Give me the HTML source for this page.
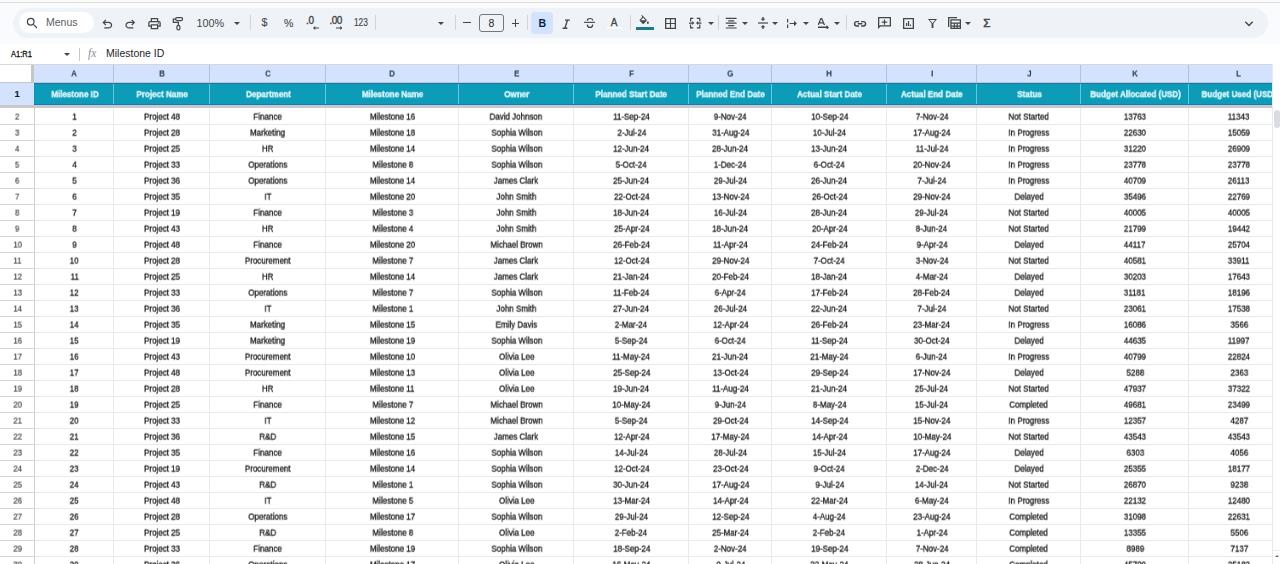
<!DOCTYPE html><html><head><meta charset="utf-8"><style>
*{box-sizing:border-box;margin:0;padding:0}
html,body{width:1280px;height:564px;overflow:hidden;background:#f9fbfd;font-family:"Liberation Sans",sans-serif;position:relative}
.a{position:absolute}
.topline{left:0;top:0;width:1280px;height:2px;background:#fbfaf8}
.topline2{left:0;top:2px;width:1280px;height:1px;background:#dcdcdc}
.tb{left:13px;top:8px;width:1255px;height:30px;border-radius:15px;background:#eff2f6}
.search{left:19px;top:12px;width:75px;height:21px;border-radius:11px;background:#fff}
.menus{left:46px;top:14.8px;font-size:10.5px;line-height:14px;color:#5b5e62}
.ic{position:absolute;fill:#444746}
.sep{position:absolute;width:1px;background:#d2d4d8;top:15px;height:15px}
.tt{position:absolute;color:#444746;font-size:10.5px;line-height:14px}
.dd{position:absolute;width:0;height:0;border-left:3px solid transparent;border-right:3px solid transparent;border-top:3.2px solid #444746;top:21.5px;margin-left:-.2px}
.fbar{left:0;top:44px;width:1280px;height:20px;background:#fff}
.grid{left:0;top:64px;width:1280px;height:500px;background:#fff;overflow:hidden}
.ch{position:absolute;top:1px;height:18px;background:#d3e3fd;color:#1e2e48;font-weight:bold;font-size:8.4px;line-height:18px;text-align:center}
.hl{position:absolute;background:#d5d7da}
.r1{position:absolute;top:19px;height:22px;background:#0c9cb8;color:#e2f9ff;font-weight:bold;font-size:8.8px;line-height:22px;text-align:center;white-space:nowrap;overflow:hidden}
.c{position:absolute;height:16px;font-size:9.4px;line-height:16px;color:#111;-webkit-text-stroke:.28px #111;text-align:center;white-space:nowrap}
.r1 span{display:inline-block;transform:translate(1.1px,.2px) scaleX(.915);will-change:transform;-webkit-text-stroke:.35px #e2f9ff}
.ch span{display:inline-block;transform:translate(1px,-.5px) scaleX(.94);will-change:transform;-webkit-text-stroke:0px #14243f}
.c span{display:inline-block;transform:translate(.9px,.6px) scaleX(.85);will-change:transform}
.rn{position:absolute;left:0;width:34px;height:16px;font-size:9.2px;line-height:16px;color:#3c3c3c;-webkit-text-stroke:.15px #3c3c3c;text-align:center}
.rn span{display:inline-block;transform:translate(.6px,.6px) scaleX(.87);will-change:transform}
.gv{position:absolute;width:1px;background:#e4ecec}
.gh{position:absolute;height:1px;background:#e4ecec;left:34px;width:1238px}
.rh{position:absolute;height:1px;background:#d6d6d6;left:0;width:34px}
</style></head><body><div class="a topline"></div><div class="a topline2"></div><div class="a tb"></div><div class="a search"></div><svg class="ic" style="left:25px;top:16px" width="14.5" height="14.5" viewBox="0 0 24 24"><path d="M15.5 14h-.79l-.28-.27A6.471 6.471 0 0 0 16 9.5 6.5 6.5 0 1 0 9.5 16c1.61 0 3.09-.59 4.23-1.57l.27.28v.79l5 4.99L20.49 19l-4.99-5zm-6 0C7.01 14 5 11.99 5 9.5S7.01 5 9.5 5 14 7.01 14 9.5 11.99 14 9.5 14z"/></svg><div class="a menus">Menus</div><svg class="ic" style="left:99.8px;top:17.2px" width="14.6" height="14.6" viewBox="0 0 24 24"><path d="M7 19v-2h7.1q1.575 0 2.738-1T18 13.5q0-1.5-1.162-2.5T14.1 10H7.8l2.6 2.6L9 14 4 9l5-5 1.4 1.4L7.8 8h6.3q2.425 0 4.163 1.575T20 13.5q0 2.35-1.737 3.925T14.1 19Z"/></svg><svg class="ic" style="left:122.9px;top:17.2px" width="14.6" height="14.6" viewBox="0 0 24 24"><path d="M9.9 19q-2.425 0-4.163-1.575T4 13.5q0-2.35 1.737-3.925T9.9 8h6.3l-2.6-2.6L15 4l5 5-5 5-1.4-1.4 2.6-2.6H9.9q-1.575 0-2.738 1T6 13.5q0 1.5 1.162 2.5T9.9 17H17v2Z"/></svg><svg class="ic" style="left:147px;top:16px" width="15" height="15" viewBox="0 0 24 24"><path d="M16 8V5H8v3H6V3h12v5ZM18 12.5q.425 0 .713-.288Q19 11.925 19 11.5t-.287-.713Q18.425 10.5 18 10.5t-.712.287Q17 11.075 17 11.5t.288.712q.287.288.712.288ZM16 19v-4H8v4Zm2 2H6v-4H2v-6q0-1.275.875-2.137Q3.75 8 5 8h14q1.275 0 2.138.863Q22 9.725 22 11v6h-4Zm2-6v-4q0-.425-.288-.713Q19.425 10 19 10H5q-.425 0-.713.287Q4 10.575 4 11v4h2v-2h12v2Z"/></svg><svg class="ic" style="left:170px;top:15px;fill:none" width="16" height="16" viewBox="0 0 16 16" stroke="#444746" stroke-width="1.2"><rect x="5.6" y="2.6" width="7" height="3" rx="1.5"/><path d="M5.6 4.1H3.3V7.4H8.4V10.3"/><rect x="6.9" y="10.3" width="3" height="4.6" rx="1.5"/></svg><div class="tt" style="left:196.5px;top:15.5px;font-size:10.8px">100%</div><div class="dd" style="left:234px"></div><div class="sep" style="left:250px"></div><div class="tt" style="left:261.5px;top:15px;font-size:10.8px;-webkit-text-stroke:.1px #444746">$</div><div class="tt" style="left:284px;top:15.5px;font-size:10.5px;-webkit-text-stroke:.1px #444746">%</div><div class="tt" style="left:306px;top:14.2px;font-size:10px;-webkit-text-stroke:.35px #444746;letter-spacing:-.3px">.0</div><svg class="ic" style="left:312.5px;top:25.5px" width="6.5" height="4" viewBox="0 0 6.5 4"><path d="M0 2L2.2 0v1.45h4.3v1.1H2.2V4z"/></svg><div class="tt" style="left:329.5px;top:14.2px;font-size:10px;-webkit-text-stroke:.35px #444746;letter-spacing:-.6px">.00</div><svg class="ic" style="left:335.8px;top:25.5px" width="6.5" height="4" viewBox="0 0 6.5 4"><path d="M6.5 2L4.3 0v1.45H0v1.1h4.3V4z"/></svg><div class="tt" style="left:354.3px;top:16.2px;font-size:10px;display:inline-block;transform:scaleX(.83);transform-origin:0 0;-webkit-text-stroke:.15px #444746">123</div><div class="sep" style="left:375px"></div><div class="dd" style="left:438px"></div><div class="sep" style="left:455px"></div><div class="a" style="left:463.3px;top:22.3px;width:7.7px;height:1.2px;background:#444746"></div><div class="a" style="left:479px;top:14px;width:25px;height:18px;border:1px solid #747775;border-radius:3px;text-align:center;font-size:10.5px;line-height:16px;color:#1f1f1f">8</div><div class="a" style="left:511.6px;top:22.5px;width:7.8px;height:1.2px;background:#444746"></div><div class="a" style="left:514.9px;top:19.2px;width:1.2px;height:7.8px;background:#444746"></div><div class="sep" style="left:527px"></div><div class="a" style="left:531px;top:12px;width:22px;height:22px;border-radius:4px;background:#d3e3fd"></div><div class="tt" style="left:538.5px;top:16px;font-size:10.5px;font-weight:bold;color:#041e49">B</div><svg class="ic" style="left:559px;top:16.5px" width="14.4" height="14.4" viewBox="0 0 24 24"><path d="M10 4v2.4h2.6l-3.6 11.2H6V20h8v-2.4h-2.6l3.6-11.2H18V4z"/></svg><svg class="ic" style="left:583px;top:17px" width="13" height="12" viewBox="0 0 13 12"><path d="M1 4.8h11v1.1H1z"/><path d="M4.3 3.8C4.3 2.3 5.4 1.5 7 1.5S9.7 2.4 9.7 3.4M4.3 7.6C4.4 9 5.5 10.4 7 10.4S9.7 9.3 9.7 7.4" style="fill:none" stroke="#444746" stroke-width="1.2"/></svg><div class="tt" style="left:610.8px;top:15.6px;font-size:10px;-webkit-text-stroke:.3px #444746">A</div><div class="a" style="left:606px;top:27.3px;width:17px;height:2px;background:rgba(255,255,255,.55)"></div><div class="sep" style="left:630px"></div><svg class="ic" style="left:638.3px;top:15px" width="12.5" height="11.5" viewBox="0 0 24 22"><path d="M16.56 8.94 7.62 0 6.21 1.41l2.38 2.38-5.15 5.15a1.49 1.49 0 0 0 0 2.12l5.5 5.5c.29.29.68.44 1.06.44s.77-.15 1.06-.44l5.5-5.5c.59-.58.59-1.53 0-2.12zM5.21 10 10 5.21 14.79 10H5.21zM19 11.5s-2 2.17-2 3.5c0 1.1.9 2 2 2s2-.9 2-2c0-1.33-2-3.5-2-3.5z"/></svg><div class="a" style="left:636px;top:27px;width:18px;height:2.7px;background:#177c88"></div><svg class="ic" style="left:664.5px;top:17.7px;fill:none" width="11" height="11" viewBox="0 0 11 11" stroke="#444746"><path d="M.65 .65h9.7v9.7H.65z" stroke-width="1.3"/><path d="M5.5 .65v9.7M.65 5.5h9.7" stroke-width="1.1"/></svg><svg class="ic" style="left:684px;top:14px" width="18" height="16" viewBox="0 0 18 16"><path d="M9.3 4.4H6.6V7.6M6.6 10.6V13.8H9.3M12.8 4.4H15.8V7.6M15.8 10.6V13.8H12.8M5 9.1H8.6M17.4 9.1H13.8" style="fill:none" stroke="#444746" stroke-width="1.2"/><path d="M8.2 7.1 10.4 9.1 8.2 11.1zM14.2 7.1 12 9.1 14.2 11.1z"/></svg><div class="dd" style="left:708px"></div><div class="sep" style="left:718px"></div><svg class="ic" style="left:724.2px;top:15.8px" width="14.4" height="14.4" viewBox="0 0 24 24"><path d="M7 15v2h10v-2H7zm-4 6h18v-2H3v2zm0-8h18v-2H3v2zm4-6v2h10V7H7zM3 3v2h18V3H3z"/></svg><div class="dd" style="left:742px"></div><svg class="ic" style="left:758px;top:17px" width="10" height="12" viewBox="0 0 10 12"><path d="M0 5.4h10v1.2H0z"/><path d="M5 4 2.6 1.8h1.7V0h1.4v1.8h1.7zM5 8 2.6 10.2h1.7V12h1.4v-1.8h1.7z"/></svg><div class="dd" style="left:772px"></div><svg class="ic" style="left:787.4px;top:18.5px" width="10" height="9" viewBox="0 0 10 9"><path d="M0 0h1.2v3.4H0zM0 5.6h1.2V9H0zM2.6 3.9h4.4V1.8L9.9 4.5 7 7.2V5.1H2.6z"/></svg><div class="dd" style="left:803px"></div><svg class="ic" style="left:818px;top:18px" width="11" height="11" viewBox="0 0 11 11"><path d="M2.5 0h1.6l3 7H5.8l-.7-1.6H1.5L.8 7H-.5zM1.9 4.3h2.8L3.3 1.2z"/><path d="M0 8.6h8.5v-1.6l2.5 2.4-2.5 2.4V9.9H0z"/></svg><div class="dd" style="left:834px"></div><div class="sep" style="left:846px"></div><svg class="ic" style="left:853px;top:19.5px;fill:none" width="15" height="8" viewBox="0 0 15 8" stroke="#444746" stroke-width="1.45"><path d="M6.1 1.6H3.8A2.2 2.2 0 0 0 3.8 6H6.1M8.1 1.6H10.4A2.2 2.2 0 0 1 10.4 6H8.1M4.8 3.8H9.4"/></svg><svg class="ic" style="left:878px;top:17px" width="13" height="12" viewBox="0 0 13 12"><path d="M0 0h13v9.5H2.5L0 12zM1.3 1.3v7.6L2 8.2h9.7V1.3z" fill-rule="evenodd"/><path d="M5.9 2.4h1.2v2.1h2.1v1.2H7.1v2.1H5.9V5.7H3.8V4.5h2.1z"/></svg><svg class="ic" style="left:903px;top:18px" width="11" height="11" viewBox="0 0 11 11"><path d="M0 0h11v11H0zM1.3 1.3v8.4h8.4V1.3z" fill-rule="evenodd"/><path d="M3 5h1.2v3H3zM4.9 3h1.2v5H4.9zM6.8 6.5H8V8H6.8z"/></svg><svg class="ic" style="left:928px;top:19px" width="9" height="9" viewBox="0 0 9 9"><path d="M0 0h9L5.4 4.5V9H3.6V4.5zM1.8 0.9l2.7 3.3 2.7-3.3z" fill-rule="evenodd"/></svg><svg class="ic" style="left:948px;top:17px" width="13" height="12" viewBox="0 0 13 12"><path d="M0 0h9v1.3H1.3V10H0z"/><path d="M2.3 2.3h10.7V12H2.3zM3.6 3.6v2h8.1v-2zm0 3.2v1.7h2.1V6.8zm3.3 0v1.7h1.7V6.8zm2.9 0v1.7h1.9V6.8zM3.6 9.7v1h2.1v-1zm3.3 0v1h1.7v-1zm2.9 0v1h1.9v-1z" fill-rule="evenodd"/></svg><div class="dd" style="left:965px"></div><div class="tt" style="left:983.3px;top:16px;font-size:11.5px;-webkit-text-stroke:.55px #444746">&Sigma;</div><svg class="ic" style="left:1243.5px;top:18.5px" width="10" height="10" viewBox="0 0 10 10"><path d="M1.3 2.8 5 6.4 8.7 2.8" fill="none" stroke="#444746" stroke-width="1.4"/></svg><div class="a fbar"></div><div class="a" style="left:10.6px;top:47px;font-size:8.4px;line-height:14px;color:#111;-webkit-text-stroke:.28px #111;transform:scaleX(.9);transform-origin:0 0">A1:R1</div><div class="dd" style="left:64.5px;top:52.5px;border-top-color:#444746"></div><div class="a" style="left:79px;top:48px;width:1px;height:13px;background:#c7c7c7"></div><div class="a" style="left:88px;top:46px;font-size:11.5px;line-height:14px;color:#8a8f94;font-style:italic;font-family:'Liberation Serif',serif">fx</div><div class="a" style="left:106px;top:46px;font-size:10.5px;line-height:14px;color:#1f1f1f">Milestone ID</div><div class="a grid"><div class="hl" style="left:0;top:0;width:1272px;height:1px"></div><div class="a" style="left:0;top:1px;width:31px;height:18px;background:#fff"></div><div class="a" style="left:31px;top:1px;width:3px;height:18px;background:#c4c7c5"></div><div class="ch" style="left:34px;width:79px"><span>A</span></div><div class="ch" style="left:113px;width:96px"><span>B</span></div><div class="ch" style="left:209px;width:116px"><span>C</span></div><div class="ch" style="left:325px;width:133px"><span>D</span></div><div class="ch" style="left:458px;width:115px"><span>E</span></div><div class="ch" style="left:573px;width:115px"><span>F</span></div><div class="ch" style="left:688px;width:83px"><span>G</span></div><div class="ch" style="left:771px;width:115px"><span>H</span></div><div class="ch" style="left:886px;width:90px"><span>I</span></div><div class="ch" style="left:976px;width:104px"><span>J</span></div><div class="ch" style="left:1080px;width:108px"><span>K</span></div><div class="ch" style="left:1188px;width:100px"><span>L</span></div><div class="hl" style="left:113px;top:1px;width:1px;height:18px;background:#b4c0d4"></div><div class="hl" style="left:209px;top:1px;width:1px;height:18px;background:#b4c0d4"></div><div class="hl" style="left:325px;top:1px;width:1px;height:18px;background:#b4c0d4"></div><div class="hl" style="left:458px;top:1px;width:1px;height:18px;background:#b4c0d4"></div><div class="hl" style="left:573px;top:1px;width:1px;height:18px;background:#b4c0d4"></div><div class="hl" style="left:688px;top:1px;width:1px;height:18px;background:#b4c0d4"></div><div class="hl" style="left:771px;top:1px;width:1px;height:18px;background:#b4c0d4"></div><div class="hl" style="left:886px;top:1px;width:1px;height:18px;background:#b4c0d4"></div><div class="hl" style="left:976px;top:1px;width:1px;height:18px;background:#b4c0d4"></div><div class="hl" style="left:1080px;top:1px;width:1px;height:18px;background:#b4c0d4"></div><div class="hl" style="left:1188px;top:1px;width:1px;height:18px;background:#b4c0d4"></div><div class="hl" style="left:1288px;top:1px;width:1px;height:18px;background:#b4c0d4"></div><div class="hl" style="left:0;top:18px;width:1272px;height:1px;background:#c4c7c5"></div><div class="a" style="left:0;top:19px;width:34px;height:22px;background:#d3e3fd;color:#041e49;font-weight:bold;font-size:9.4px;line-height:22px;text-align:center;-webkit-text-stroke:.1px #041e49">1</div><div class="r1" style="left:34px;width:79px"><span>Milestone ID</span></div><div class="r1" style="left:113px;width:96px"><span>Project Name</span></div><div class="r1" style="left:209px;width:116px"><span>Department</span></div><div class="r1" style="left:325px;width:133px"><span>Milestone Name</span></div><div class="r1" style="left:458px;width:115px"><span>Owner</span></div><div class="r1" style="left:573px;width:115px"><span>Planned Start Date</span></div><div class="r1" style="left:688px;width:83px"><span>Planned End Date</span></div><div class="r1" style="left:771px;width:115px"><span>Actual Start Date</span></div><div class="r1" style="left:886px;width:90px"><span>Actual End Date</span></div><div class="r1" style="left:976px;width:104px"><span>Status</span></div><div class="r1" style="left:1080px;width:108px"><span>Budget Allocated (USD)</span></div><div class="r1" style="left:1188px;width:100px"><span>Budget Used (USD)</span></div><div class="a" style="left:113px;top:20px;width:1px;height:20px;background:#62c8e4"></div><div class="a" style="left:209px;top:20px;width:1px;height:20px;background:#62c8e4"></div><div class="a" style="left:325px;top:20px;width:1px;height:20px;background:#62c8e4"></div><div class="a" style="left:458px;top:20px;width:1px;height:20px;background:#62c8e4"></div><div class="a" style="left:573px;top:20px;width:1px;height:20px;background:#62c8e4"></div><div class="a" style="left:688px;top:20px;width:1px;height:20px;background:#62c8e4"></div><div class="a" style="left:771px;top:20px;width:1px;height:20px;background:#62c8e4"></div><div class="a" style="left:886px;top:20px;width:1px;height:20px;background:#62c8e4"></div><div class="a" style="left:976px;top:20px;width:1px;height:20px;background:#62c8e4"></div><div class="a" style="left:1080px;top:20px;width:1px;height:20px;background:#62c8e4"></div><div class="a" style="left:1188px;top:20px;width:1px;height:20px;background:#62c8e4"></div><div class="a" style="left:1288px;top:20px;width:1px;height:20px;background:#62c8e4"></div><div class="a" style="left:34px;top:19px;width:1238px;height:1px;background:#1478c0"></div><div class="a" style="left:34px;top:40px;width:1238px;height:1px;background:#1478c0"></div><div class="a" style="left:34px;top:19px;width:1px;height:22px;background:#1a73e8;opacity:.3"></div><div class="a" style="left:0;top:41px;width:1272px;height:3px;background:#c9c9c9"></div><div class="rn" style="top:44px"><span>2</span></div><div class="rh" style="top:60px"></div><div class="c" style="left:34px;top:44px;width:79px"><span>1</span></div><div class="c" style="left:113px;top:44px;width:96px"><span>Project 48</span></div><div class="c" style="left:209px;top:44px;width:116px"><span>Finance</span></div><div class="c" style="left:325px;top:44px;width:133px"><span>Milestone 16</span></div><div class="c" style="left:458px;top:44px;width:115px"><span>David Johnson</span></div><div class="c" style="left:573px;top:44px;width:115px"><span>11-Sep-24</span></div><div class="c" style="left:688px;top:44px;width:83px"><span>9-Nov-24</span></div><div class="c" style="left:771px;top:44px;width:115px"><span>10-Sep-24</span></div><div class="c" style="left:886px;top:44px;width:90px"><span>7-Nov-24</span></div><div class="c" style="left:976px;top:44px;width:104px"><span>Not Started</span></div><div class="c" style="left:1080px;top:44px;width:108px"><span>13763</span></div><div class="c" style="left:1188px;top:44px;width:100px"><span>11343</span></div><div class="gh" style="top:60px"></div><div class="rn" style="top:60px"><span>3</span></div><div class="rh" style="top:76px"></div><div class="c" style="left:34px;top:60px;width:79px"><span>2</span></div><div class="c" style="left:113px;top:60px;width:96px"><span>Project 28</span></div><div class="c" style="left:209px;top:60px;width:116px"><span>Marketing</span></div><div class="c" style="left:325px;top:60px;width:133px"><span>Milestone 18</span></div><div class="c" style="left:458px;top:60px;width:115px"><span>Sophia Wilson</span></div><div class="c" style="left:573px;top:60px;width:115px"><span>2-Jul-24</span></div><div class="c" style="left:688px;top:60px;width:83px"><span>31-Aug-24</span></div><div class="c" style="left:771px;top:60px;width:115px"><span>10-Jul-24</span></div><div class="c" style="left:886px;top:60px;width:90px"><span>17-Aug-24</span></div><div class="c" style="left:976px;top:60px;width:104px"><span>In Progress</span></div><div class="c" style="left:1080px;top:60px;width:108px"><span>22630</span></div><div class="c" style="left:1188px;top:60px;width:100px"><span>15059</span></div><div class="gh" style="top:76px"></div><div class="rn" style="top:76px"><span>4</span></div><div class="rh" style="top:92px"></div><div class="c" style="left:34px;top:76px;width:79px"><span>3</span></div><div class="c" style="left:113px;top:76px;width:96px"><span>Project 25</span></div><div class="c" style="left:209px;top:76px;width:116px"><span>HR</span></div><div class="c" style="left:325px;top:76px;width:133px"><span>Milestone 14</span></div><div class="c" style="left:458px;top:76px;width:115px"><span>Sophia Wilson</span></div><div class="c" style="left:573px;top:76px;width:115px"><span>12-Jun-24</span></div><div class="c" style="left:688px;top:76px;width:83px"><span>28-Jun-24</span></div><div class="c" style="left:771px;top:76px;width:115px"><span>13-Jun-24</span></div><div class="c" style="left:886px;top:76px;width:90px"><span>11-Jul-24</span></div><div class="c" style="left:976px;top:76px;width:104px"><span>In Progress</span></div><div class="c" style="left:1080px;top:76px;width:108px"><span>31220</span></div><div class="c" style="left:1188px;top:76px;width:100px"><span>26909</span></div><div class="gh" style="top:92px"></div><div class="rn" style="top:92px"><span>5</span></div><div class="rh" style="top:108px"></div><div class="c" style="left:34px;top:92px;width:79px"><span>4</span></div><div class="c" style="left:113px;top:92px;width:96px"><span>Project 33</span></div><div class="c" style="left:209px;top:92px;width:116px"><span>Operations</span></div><div class="c" style="left:325px;top:92px;width:133px"><span>Milestone 8</span></div><div class="c" style="left:458px;top:92px;width:115px"><span>Sophia Wilson</span></div><div class="c" style="left:573px;top:92px;width:115px"><span>5-Oct-24</span></div><div class="c" style="left:688px;top:92px;width:83px"><span>1-Dec-24</span></div><div class="c" style="left:771px;top:92px;width:115px"><span>6-Oct-24</span></div><div class="c" style="left:886px;top:92px;width:90px"><span>20-Nov-24</span></div><div class="c" style="left:976px;top:92px;width:104px"><span>In Progress</span></div><div class="c" style="left:1080px;top:92px;width:108px"><span>23778</span></div><div class="c" style="left:1188px;top:92px;width:100px"><span>23778</span></div><div class="gh" style="top:108px"></div><div class="rn" style="top:108px"><span>6</span></div><div class="rh" style="top:124px"></div><div class="c" style="left:34px;top:108px;width:79px"><span>5</span></div><div class="c" style="left:113px;top:108px;width:96px"><span>Project 36</span></div><div class="c" style="left:209px;top:108px;width:116px"><span>Operations</span></div><div class="c" style="left:325px;top:108px;width:133px"><span>Milestone 14</span></div><div class="c" style="left:458px;top:108px;width:115px"><span>James Clark</span></div><div class="c" style="left:573px;top:108px;width:115px"><span>25-Jun-24</span></div><div class="c" style="left:688px;top:108px;width:83px"><span>29-Jul-24</span></div><div class="c" style="left:771px;top:108px;width:115px"><span>26-Jun-24</span></div><div class="c" style="left:886px;top:108px;width:90px"><span>7-Jul-24</span></div><div class="c" style="left:976px;top:108px;width:104px"><span>In Progress</span></div><div class="c" style="left:1080px;top:108px;width:108px"><span>40709</span></div><div class="c" style="left:1188px;top:108px;width:100px"><span>26113</span></div><div class="gh" style="top:124px"></div><div class="rn" style="top:124px"><span>7</span></div><div class="rh" style="top:140px"></div><div class="c" style="left:34px;top:124px;width:79px"><span>6</span></div><div class="c" style="left:113px;top:124px;width:96px"><span>Project 35</span></div><div class="c" style="left:209px;top:124px;width:116px"><span>IT</span></div><div class="c" style="left:325px;top:124px;width:133px"><span>Milestone 20</span></div><div class="c" style="left:458px;top:124px;width:115px"><span>John Smith</span></div><div class="c" style="left:573px;top:124px;width:115px"><span>22-Oct-24</span></div><div class="c" style="left:688px;top:124px;width:83px"><span>13-Nov-24</span></div><div class="c" style="left:771px;top:124px;width:115px"><span>26-Oct-24</span></div><div class="c" style="left:886px;top:124px;width:90px"><span>29-Nov-24</span></div><div class="c" style="left:976px;top:124px;width:104px"><span>Delayed</span></div><div class="c" style="left:1080px;top:124px;width:108px"><span>35496</span></div><div class="c" style="left:1188px;top:124px;width:100px"><span>22769</span></div><div class="gh" style="top:140px"></div><div class="rn" style="top:140px"><span>8</span></div><div class="rh" style="top:156px"></div><div class="c" style="left:34px;top:140px;width:79px"><span>7</span></div><div class="c" style="left:113px;top:140px;width:96px"><span>Project 19</span></div><div class="c" style="left:209px;top:140px;width:116px"><span>Finance</span></div><div class="c" style="left:325px;top:140px;width:133px"><span>Milestone 3</span></div><div class="c" style="left:458px;top:140px;width:115px"><span>John Smith</span></div><div class="c" style="left:573px;top:140px;width:115px"><span>18-Jun-24</span></div><div class="c" style="left:688px;top:140px;width:83px"><span>16-Jul-24</span></div><div class="c" style="left:771px;top:140px;width:115px"><span>28-Jun-24</span></div><div class="c" style="left:886px;top:140px;width:90px"><span>29-Jul-24</span></div><div class="c" style="left:976px;top:140px;width:104px"><span>Not Started</span></div><div class="c" style="left:1080px;top:140px;width:108px"><span>40005</span></div><div class="c" style="left:1188px;top:140px;width:100px"><span>40005</span></div><div class="gh" style="top:156px"></div><div class="rn" style="top:156px"><span>9</span></div><div class="rh" style="top:172px"></div><div class="c" style="left:34px;top:156px;width:79px"><span>8</span></div><div class="c" style="left:113px;top:156px;width:96px"><span>Project 43</span></div><div class="c" style="left:209px;top:156px;width:116px"><span>HR</span></div><div class="c" style="left:325px;top:156px;width:133px"><span>Milestone 4</span></div><div class="c" style="left:458px;top:156px;width:115px"><span>John Smith</span></div><div class="c" style="left:573px;top:156px;width:115px"><span>25-Apr-24</span></div><div class="c" style="left:688px;top:156px;width:83px"><span>18-Jun-24</span></div><div class="c" style="left:771px;top:156px;width:115px"><span>20-Apr-24</span></div><div class="c" style="left:886px;top:156px;width:90px"><span>8-Jun-24</span></div><div class="c" style="left:976px;top:156px;width:104px"><span>Not Started</span></div><div class="c" style="left:1080px;top:156px;width:108px"><span>21799</span></div><div class="c" style="left:1188px;top:156px;width:100px"><span>19442</span></div><div class="gh" style="top:172px"></div><div class="rn" style="top:172px"><span>10</span></div><div class="rh" style="top:188px"></div><div class="c" style="left:34px;top:172px;width:79px"><span>9</span></div><div class="c" style="left:113px;top:172px;width:96px"><span>Project 48</span></div><div class="c" style="left:209px;top:172px;width:116px"><span>Finance</span></div><div class="c" style="left:325px;top:172px;width:133px"><span>Milestone 20</span></div><div class="c" style="left:458px;top:172px;width:115px"><span>Michael Brown</span></div><div class="c" style="left:573px;top:172px;width:115px"><span>26-Feb-24</span></div><div class="c" style="left:688px;top:172px;width:83px"><span>11-Apr-24</span></div><div class="c" style="left:771px;top:172px;width:115px"><span>24-Feb-24</span></div><div class="c" style="left:886px;top:172px;width:90px"><span>9-Apr-24</span></div><div class="c" style="left:976px;top:172px;width:104px"><span>Delayed</span></div><div class="c" style="left:1080px;top:172px;width:108px"><span>44117</span></div><div class="c" style="left:1188px;top:172px;width:100px"><span>25704</span></div><div class="gh" style="top:188px"></div><div class="rn" style="top:188px"><span>11</span></div><div class="rh" style="top:204px"></div><div class="c" style="left:34px;top:188px;width:79px"><span>10</span></div><div class="c" style="left:113px;top:188px;width:96px"><span>Project 28</span></div><div class="c" style="left:209px;top:188px;width:116px"><span>Procurement</span></div><div class="c" style="left:325px;top:188px;width:133px"><span>Milestone 7</span></div><div class="c" style="left:458px;top:188px;width:115px"><span>James Clark</span></div><div class="c" style="left:573px;top:188px;width:115px"><span>12-Oct-24</span></div><div class="c" style="left:688px;top:188px;width:83px"><span>29-Nov-24</span></div><div class="c" style="left:771px;top:188px;width:115px"><span>7-Oct-24</span></div><div class="c" style="left:886px;top:188px;width:90px"><span>3-Nov-24</span></div><div class="c" style="left:976px;top:188px;width:104px"><span>Not Started</span></div><div class="c" style="left:1080px;top:188px;width:108px"><span>40581</span></div><div class="c" style="left:1188px;top:188px;width:100px"><span>33911</span></div><div class="gh" style="top:204px"></div><div class="rn" style="top:204px"><span>12</span></div><div class="rh" style="top:220px"></div><div class="c" style="left:34px;top:204px;width:79px"><span>11</span></div><div class="c" style="left:113px;top:204px;width:96px"><span>Project 25</span></div><div class="c" style="left:209px;top:204px;width:116px"><span>HR</span></div><div class="c" style="left:325px;top:204px;width:133px"><span>Milestone 14</span></div><div class="c" style="left:458px;top:204px;width:115px"><span>James Clark</span></div><div class="c" style="left:573px;top:204px;width:115px"><span>21-Jan-24</span></div><div class="c" style="left:688px;top:204px;width:83px"><span>20-Feb-24</span></div><div class="c" style="left:771px;top:204px;width:115px"><span>18-Jan-24</span></div><div class="c" style="left:886px;top:204px;width:90px"><span>4-Mar-24</span></div><div class="c" style="left:976px;top:204px;width:104px"><span>Delayed</span></div><div class="c" style="left:1080px;top:204px;width:108px"><span>30203</span></div><div class="c" style="left:1188px;top:204px;width:100px"><span>17643</span></div><div class="gh" style="top:220px"></div><div class="rn" style="top:220px"><span>13</span></div><div class="rh" style="top:236px"></div><div class="c" style="left:34px;top:220px;width:79px"><span>12</span></div><div class="c" style="left:113px;top:220px;width:96px"><span>Project 33</span></div><div class="c" style="left:209px;top:220px;width:116px"><span>Operations</span></div><div class="c" style="left:325px;top:220px;width:133px"><span>Milestone 7</span></div><div class="c" style="left:458px;top:220px;width:115px"><span>Sophia Wilson</span></div><div class="c" style="left:573px;top:220px;width:115px"><span>11-Feb-24</span></div><div class="c" style="left:688px;top:220px;width:83px"><span>6-Apr-24</span></div><div class="c" style="left:771px;top:220px;width:115px"><span>17-Feb-24</span></div><div class="c" style="left:886px;top:220px;width:90px"><span>28-Feb-24</span></div><div class="c" style="left:976px;top:220px;width:104px"><span>Delayed</span></div><div class="c" style="left:1080px;top:220px;width:108px"><span>31181</span></div><div class="c" style="left:1188px;top:220px;width:100px"><span>18196</span></div><div class="gh" style="top:236px"></div><div class="rn" style="top:236px"><span>14</span></div><div class="rh" style="top:252px"></div><div class="c" style="left:34px;top:236px;width:79px"><span>13</span></div><div class="c" style="left:113px;top:236px;width:96px"><span>Project 36</span></div><div class="c" style="left:209px;top:236px;width:116px"><span>IT</span></div><div class="c" style="left:325px;top:236px;width:133px"><span>Milestone 1</span></div><div class="c" style="left:458px;top:236px;width:115px"><span>John Smith</span></div><div class="c" style="left:573px;top:236px;width:115px"><span>27-Jun-24</span></div><div class="c" style="left:688px;top:236px;width:83px"><span>26-Jul-24</span></div><div class="c" style="left:771px;top:236px;width:115px"><span>22-Jun-24</span></div><div class="c" style="left:886px;top:236px;width:90px"><span>7-Jul-24</span></div><div class="c" style="left:976px;top:236px;width:104px"><span>Not Started</span></div><div class="c" style="left:1080px;top:236px;width:108px"><span>23061</span></div><div class="c" style="left:1188px;top:236px;width:100px"><span>17538</span></div><div class="gh" style="top:252px"></div><div class="rn" style="top:252px"><span>15</span></div><div class="rh" style="top:268px"></div><div class="c" style="left:34px;top:252px;width:79px"><span>14</span></div><div class="c" style="left:113px;top:252px;width:96px"><span>Project 35</span></div><div class="c" style="left:209px;top:252px;width:116px"><span>Marketing</span></div><div class="c" style="left:325px;top:252px;width:133px"><span>Milestone 15</span></div><div class="c" style="left:458px;top:252px;width:115px"><span>Emily Davis</span></div><div class="c" style="left:573px;top:252px;width:115px"><span>2-Mar-24</span></div><div class="c" style="left:688px;top:252px;width:83px"><span>12-Apr-24</span></div><div class="c" style="left:771px;top:252px;width:115px"><span>26-Feb-24</span></div><div class="c" style="left:886px;top:252px;width:90px"><span>23-Mar-24</span></div><div class="c" style="left:976px;top:252px;width:104px"><span>In Progress</span></div><div class="c" style="left:1080px;top:252px;width:108px"><span>16086</span></div><div class="c" style="left:1188px;top:252px;width:100px"><span>3566</span></div><div class="gh" style="top:268px"></div><div class="rn" style="top:268px"><span>16</span></div><div class="rh" style="top:284px"></div><div class="c" style="left:34px;top:268px;width:79px"><span>15</span></div><div class="c" style="left:113px;top:268px;width:96px"><span>Project 19</span></div><div class="c" style="left:209px;top:268px;width:116px"><span>Marketing</span></div><div class="c" style="left:325px;top:268px;width:133px"><span>Milestone 19</span></div><div class="c" style="left:458px;top:268px;width:115px"><span>Sophia Wilson</span></div><div class="c" style="left:573px;top:268px;width:115px"><span>5-Sep-24</span></div><div class="c" style="left:688px;top:268px;width:83px"><span>6-Oct-24</span></div><div class="c" style="left:771px;top:268px;width:115px"><span>11-Sep-24</span></div><div class="c" style="left:886px;top:268px;width:90px"><span>30-Oct-24</span></div><div class="c" style="left:976px;top:268px;width:104px"><span>Delayed</span></div><div class="c" style="left:1080px;top:268px;width:108px"><span>44635</span></div><div class="c" style="left:1188px;top:268px;width:100px"><span>11997</span></div><div class="gh" style="top:284px"></div><div class="rn" style="top:284px"><span>17</span></div><div class="rh" style="top:300px"></div><div class="c" style="left:34px;top:284px;width:79px"><span>16</span></div><div class="c" style="left:113px;top:284px;width:96px"><span>Project 43</span></div><div class="c" style="left:209px;top:284px;width:116px"><span>Procurement</span></div><div class="c" style="left:325px;top:284px;width:133px"><span>Milestone 10</span></div><div class="c" style="left:458px;top:284px;width:115px"><span>Olivia Lee</span></div><div class="c" style="left:573px;top:284px;width:115px"><span>11-May-24</span></div><div class="c" style="left:688px;top:284px;width:83px"><span>21-Jun-24</span></div><div class="c" style="left:771px;top:284px;width:115px"><span>21-May-24</span></div><div class="c" style="left:886px;top:284px;width:90px"><span>6-Jun-24</span></div><div class="c" style="left:976px;top:284px;width:104px"><span>In Progress</span></div><div class="c" style="left:1080px;top:284px;width:108px"><span>40799</span></div><div class="c" style="left:1188px;top:284px;width:100px"><span>22824</span></div><div class="gh" style="top:300px"></div><div class="rn" style="top:300px"><span>18</span></div><div class="rh" style="top:316px"></div><div class="c" style="left:34px;top:300px;width:79px"><span>17</span></div><div class="c" style="left:113px;top:300px;width:96px"><span>Project 48</span></div><div class="c" style="left:209px;top:300px;width:116px"><span>Procurement</span></div><div class="c" style="left:325px;top:300px;width:133px"><span>Milestone 13</span></div><div class="c" style="left:458px;top:300px;width:115px"><span>Olivia Lee</span></div><div class="c" style="left:573px;top:300px;width:115px"><span>25-Sep-24</span></div><div class="c" style="left:688px;top:300px;width:83px"><span>13-Oct-24</span></div><div class="c" style="left:771px;top:300px;width:115px"><span>29-Sep-24</span></div><div class="c" style="left:886px;top:300px;width:90px"><span>17-Nov-24</span></div><div class="c" style="left:976px;top:300px;width:104px"><span>Delayed</span></div><div class="c" style="left:1080px;top:300px;width:108px"><span>5288</span></div><div class="c" style="left:1188px;top:300px;width:100px"><span>2363</span></div><div class="gh" style="top:316px"></div><div class="rn" style="top:316px"><span>19</span></div><div class="rh" style="top:332px"></div><div class="c" style="left:34px;top:316px;width:79px"><span>18</span></div><div class="c" style="left:113px;top:316px;width:96px"><span>Project 28</span></div><div class="c" style="left:209px;top:316px;width:116px"><span>HR</span></div><div class="c" style="left:325px;top:316px;width:133px"><span>Milestone 11</span></div><div class="c" style="left:458px;top:316px;width:115px"><span>Olivia Lee</span></div><div class="c" style="left:573px;top:316px;width:115px"><span>19-Jun-24</span></div><div class="c" style="left:688px;top:316px;width:83px"><span>11-Aug-24</span></div><div class="c" style="left:771px;top:316px;width:115px"><span>21-Jun-24</span></div><div class="c" style="left:886px;top:316px;width:90px"><span>25-Jul-24</span></div><div class="c" style="left:976px;top:316px;width:104px"><span>Not Started</span></div><div class="c" style="left:1080px;top:316px;width:108px"><span>47937</span></div><div class="c" style="left:1188px;top:316px;width:100px"><span>37322</span></div><div class="gh" style="top:332px"></div><div class="rn" style="top:332px"><span>20</span></div><div class="rh" style="top:348px"></div><div class="c" style="left:34px;top:332px;width:79px"><span>19</span></div><div class="c" style="left:113px;top:332px;width:96px"><span>Project 25</span></div><div class="c" style="left:209px;top:332px;width:116px"><span>Finance</span></div><div class="c" style="left:325px;top:332px;width:133px"><span>Milestone 7</span></div><div class="c" style="left:458px;top:332px;width:115px"><span>Michael Brown</span></div><div class="c" style="left:573px;top:332px;width:115px"><span>10-May-24</span></div><div class="c" style="left:688px;top:332px;width:83px"><span>9-Jun-24</span></div><div class="c" style="left:771px;top:332px;width:115px"><span>8-May-24</span></div><div class="c" style="left:886px;top:332px;width:90px"><span>15-Jul-24</span></div><div class="c" style="left:976px;top:332px;width:104px"><span>Completed</span></div><div class="c" style="left:1080px;top:332px;width:108px"><span>49681</span></div><div class="c" style="left:1188px;top:332px;width:100px"><span>23499</span></div><div class="gh" style="top:348px"></div><div class="rn" style="top:348px"><span>21</span></div><div class="rh" style="top:364px"></div><div class="c" style="left:34px;top:348px;width:79px"><span>20</span></div><div class="c" style="left:113px;top:348px;width:96px"><span>Project 33</span></div><div class="c" style="left:209px;top:348px;width:116px"><span>IT</span></div><div class="c" style="left:325px;top:348px;width:133px"><span>Milestone 12</span></div><div class="c" style="left:458px;top:348px;width:115px"><span>Michael Brown</span></div><div class="c" style="left:573px;top:348px;width:115px"><span>5-Sep-24</span></div><div class="c" style="left:688px;top:348px;width:83px"><span>29-Oct-24</span></div><div class="c" style="left:771px;top:348px;width:115px"><span>14-Sep-24</span></div><div class="c" style="left:886px;top:348px;width:90px"><span>15-Nov-24</span></div><div class="c" style="left:976px;top:348px;width:104px"><span>In Progress</span></div><div class="c" style="left:1080px;top:348px;width:108px"><span>12357</span></div><div class="c" style="left:1188px;top:348px;width:100px"><span>4287</span></div><div class="gh" style="top:364px"></div><div class="rn" style="top:364px"><span>22</span></div><div class="rh" style="top:380px"></div><div class="c" style="left:34px;top:364px;width:79px"><span>21</span></div><div class="c" style="left:113px;top:364px;width:96px"><span>Project 36</span></div><div class="c" style="left:209px;top:364px;width:116px"><span>R&amp;D</span></div><div class="c" style="left:325px;top:364px;width:133px"><span>Milestone 15</span></div><div class="c" style="left:458px;top:364px;width:115px"><span>James Clark</span></div><div class="c" style="left:573px;top:364px;width:115px"><span>12-Apr-24</span></div><div class="c" style="left:688px;top:364px;width:83px"><span>17-May-24</span></div><div class="c" style="left:771px;top:364px;width:115px"><span>14-Apr-24</span></div><div class="c" style="left:886px;top:364px;width:90px"><span>10-May-24</span></div><div class="c" style="left:976px;top:364px;width:104px"><span>Not Started</span></div><div class="c" style="left:1080px;top:364px;width:108px"><span>43543</span></div><div class="c" style="left:1188px;top:364px;width:100px"><span>43543</span></div><div class="gh" style="top:380px"></div><div class="rn" style="top:380px"><span>23</span></div><div class="rh" style="top:396px"></div><div class="c" style="left:34px;top:380px;width:79px"><span>22</span></div><div class="c" style="left:113px;top:380px;width:96px"><span>Project 35</span></div><div class="c" style="left:209px;top:380px;width:116px"><span>Finance</span></div><div class="c" style="left:325px;top:380px;width:133px"><span>Milestone 16</span></div><div class="c" style="left:458px;top:380px;width:115px"><span>Sophia Wilson</span></div><div class="c" style="left:573px;top:380px;width:115px"><span>14-Jul-24</span></div><div class="c" style="left:688px;top:380px;width:83px"><span>28-Jul-24</span></div><div class="c" style="left:771px;top:380px;width:115px"><span>15-Jul-24</span></div><div class="c" style="left:886px;top:380px;width:90px"><span>17-Aug-24</span></div><div class="c" style="left:976px;top:380px;width:104px"><span>Delayed</span></div><div class="c" style="left:1080px;top:380px;width:108px"><span>6303</span></div><div class="c" style="left:1188px;top:380px;width:100px"><span>4056</span></div><div class="gh" style="top:396px"></div><div class="rn" style="top:396px"><span>24</span></div><div class="rh" style="top:412px"></div><div class="c" style="left:34px;top:396px;width:79px"><span>23</span></div><div class="c" style="left:113px;top:396px;width:96px"><span>Project 19</span></div><div class="c" style="left:209px;top:396px;width:116px"><span>Procurement</span></div><div class="c" style="left:325px;top:396px;width:133px"><span>Milestone 14</span></div><div class="c" style="left:458px;top:396px;width:115px"><span>Sophia Wilson</span></div><div class="c" style="left:573px;top:396px;width:115px"><span>12-Oct-24</span></div><div class="c" style="left:688px;top:396px;width:83px"><span>23-Oct-24</span></div><div class="c" style="left:771px;top:396px;width:115px"><span>9-Oct-24</span></div><div class="c" style="left:886px;top:396px;width:90px"><span>2-Dec-24</span></div><div class="c" style="left:976px;top:396px;width:104px"><span>Delayed</span></div><div class="c" style="left:1080px;top:396px;width:108px"><span>25355</span></div><div class="c" style="left:1188px;top:396px;width:100px"><span>18177</span></div><div class="gh" style="top:412px"></div><div class="rn" style="top:412px"><span>25</span></div><div class="rh" style="top:428px"></div><div class="c" style="left:34px;top:412px;width:79px"><span>24</span></div><div class="c" style="left:113px;top:412px;width:96px"><span>Project 43</span></div><div class="c" style="left:209px;top:412px;width:116px"><span>R&amp;D</span></div><div class="c" style="left:325px;top:412px;width:133px"><span>Milestone 1</span></div><div class="c" style="left:458px;top:412px;width:115px"><span>Sophia Wilson</span></div><div class="c" style="left:573px;top:412px;width:115px"><span>30-Jun-24</span></div><div class="c" style="left:688px;top:412px;width:83px"><span>17-Aug-24</span></div><div class="c" style="left:771px;top:412px;width:115px"><span>9-Jul-24</span></div><div class="c" style="left:886px;top:412px;width:90px"><span>14-Jul-24</span></div><div class="c" style="left:976px;top:412px;width:104px"><span>Not Started</span></div><div class="c" style="left:1080px;top:412px;width:108px"><span>26870</span></div><div class="c" style="left:1188px;top:412px;width:100px"><span>9238</span></div><div class="gh" style="top:428px"></div><div class="rn" style="top:428px"><span>26</span></div><div class="rh" style="top:444px"></div><div class="c" style="left:34px;top:428px;width:79px"><span>25</span></div><div class="c" style="left:113px;top:428px;width:96px"><span>Project 48</span></div><div class="c" style="left:209px;top:428px;width:116px"><span>IT</span></div><div class="c" style="left:325px;top:428px;width:133px"><span>Milestone 5</span></div><div class="c" style="left:458px;top:428px;width:115px"><span>Olivia Lee</span></div><div class="c" style="left:573px;top:428px;width:115px"><span>13-Mar-24</span></div><div class="c" style="left:688px;top:428px;width:83px"><span>14-Apr-24</span></div><div class="c" style="left:771px;top:428px;width:115px"><span>22-Mar-24</span></div><div class="c" style="left:886px;top:428px;width:90px"><span>6-May-24</span></div><div class="c" style="left:976px;top:428px;width:104px"><span>In Progress</span></div><div class="c" style="left:1080px;top:428px;width:108px"><span>22132</span></div><div class="c" style="left:1188px;top:428px;width:100px"><span>12480</span></div><div class="gh" style="top:444px"></div><div class="rn" style="top:444px"><span>27</span></div><div class="rh" style="top:460px"></div><div class="c" style="left:34px;top:444px;width:79px"><span>26</span></div><div class="c" style="left:113px;top:444px;width:96px"><span>Project 28</span></div><div class="c" style="left:209px;top:444px;width:116px"><span>Operations</span></div><div class="c" style="left:325px;top:444px;width:133px"><span>Milestone 17</span></div><div class="c" style="left:458px;top:444px;width:115px"><span>Sophia Wilson</span></div><div class="c" style="left:573px;top:444px;width:115px"><span>29-Jul-24</span></div><div class="c" style="left:688px;top:444px;width:83px"><span>12-Sep-24</span></div><div class="c" style="left:771px;top:444px;width:115px"><span>4-Aug-24</span></div><div class="c" style="left:886px;top:444px;width:90px"><span>23-Aug-24</span></div><div class="c" style="left:976px;top:444px;width:104px"><span>Completed</span></div><div class="c" style="left:1080px;top:444px;width:108px"><span>31098</span></div><div class="c" style="left:1188px;top:444px;width:100px"><span>22631</span></div><div class="gh" style="top:460px"></div><div class="rn" style="top:460px"><span>28</span></div><div class="rh" style="top:476px"></div><div class="c" style="left:34px;top:460px;width:79px"><span>27</span></div><div class="c" style="left:113px;top:460px;width:96px"><span>Project 25</span></div><div class="c" style="left:209px;top:460px;width:116px"><span>R&amp;D</span></div><div class="c" style="left:325px;top:460px;width:133px"><span>Milestone 8</span></div><div class="c" style="left:458px;top:460px;width:115px"><span>Olivia Lee</span></div><div class="c" style="left:573px;top:460px;width:115px"><span>2-Feb-24</span></div><div class="c" style="left:688px;top:460px;width:83px"><span>25-Mar-24</span></div><div class="c" style="left:771px;top:460px;width:115px"><span>2-Feb-24</span></div><div class="c" style="left:886px;top:460px;width:90px"><span>1-Apr-24</span></div><div class="c" style="left:976px;top:460px;width:104px"><span>Completed</span></div><div class="c" style="left:1080px;top:460px;width:108px"><span>13355</span></div><div class="c" style="left:1188px;top:460px;width:100px"><span>5506</span></div><div class="gh" style="top:476px"></div><div class="rn" style="top:476px"><span>29</span></div><div class="rh" style="top:492px"></div><div class="c" style="left:34px;top:476px;width:79px"><span>28</span></div><div class="c" style="left:113px;top:476px;width:96px"><span>Project 33</span></div><div class="c" style="left:209px;top:476px;width:116px"><span>Finance</span></div><div class="c" style="left:325px;top:476px;width:133px"><span>Milestone 19</span></div><div class="c" style="left:458px;top:476px;width:115px"><span>Sophia Wilson</span></div><div class="c" style="left:573px;top:476px;width:115px"><span>18-Sep-24</span></div><div class="c" style="left:688px;top:476px;width:83px"><span>2-Nov-24</span></div><div class="c" style="left:771px;top:476px;width:115px"><span>19-Sep-24</span></div><div class="c" style="left:886px;top:476px;width:90px"><span>7-Nov-24</span></div><div class="c" style="left:976px;top:476px;width:104px"><span>Completed</span></div><div class="c" style="left:1080px;top:476px;width:108px"><span>8989</span></div><div class="c" style="left:1188px;top:476px;width:100px"><span>7137</span></div><div class="gh" style="top:492px"></div><div class="rn" style="top:492px"><span>30</span></div><div class="rh" style="top:508px"></div><div class="c" style="left:34px;top:492px;width:79px"><span>29</span></div><div class="c" style="left:113px;top:492px;width:96px"><span>Project 36</span></div><div class="c" style="left:209px;top:492px;width:116px"><span>Operations</span></div><div class="c" style="left:325px;top:492px;width:133px"><span>Milestone 17</span></div><div class="c" style="left:458px;top:492px;width:115px"><span>Olivia Lee</span></div><div class="c" style="left:573px;top:492px;width:115px"><span>16-May-24</span></div><div class="c" style="left:688px;top:492px;width:83px"><span>9-Jul-24</span></div><div class="c" style="left:771px;top:492px;width:115px"><span>22-May-24</span></div><div class="c" style="left:886px;top:492px;width:90px"><span>28-Jun-24</span></div><div class="c" style="left:976px;top:492px;width:104px"><span>Completed</span></div><div class="c" style="left:1080px;top:492px;width:108px"><span>45709</span></div><div class="c" style="left:1188px;top:492px;width:100px"><span>25182</span></div><div class="gh" style="top:508px"></div><div class="gv" style="left:113px;top:44px;height:460px"></div><div class="gv" style="left:209px;top:44px;height:460px"></div><div class="gv" style="left:325px;top:44px;height:460px"></div><div class="gv" style="left:458px;top:44px;height:460px"></div><div class="gv" style="left:573px;top:44px;height:460px"></div><div class="gv" style="left:688px;top:44px;height:460px"></div><div class="gv" style="left:771px;top:44px;height:460px"></div><div class="gv" style="left:886px;top:44px;height:460px"></div><div class="gv" style="left:976px;top:44px;height:460px"></div><div class="gv" style="left:1080px;top:44px;height:460px"></div><div class="gv" style="left:1188px;top:44px;height:460px"></div><div class="gv" style="left:1288px;top:44px;height:460px"></div><div class="a" style="left:34px;top:44px;width:1px;height:460px;background:#d0d0d0"></div><div class="a" style="left:1272px;top:0;width:8px;height:500px;background:#fff;border-left:1px solid #e8eaed"></div><div class="a" style="left:1274px;top:46px;width:5.5px;height:18px;border-radius:3px;background:#dadce0"></div><div class="a" style="left:1273px;top:486px;width:7px;height:1px;background:#ececec"></div><div class="a" style="left:1274.5px;top:490.5px;width:0;height:0;border-left:2.3px solid transparent;border-right:2.3px solid transparent;border-bottom:2.6px solid #6f6f6f"></div></div></body></html>
